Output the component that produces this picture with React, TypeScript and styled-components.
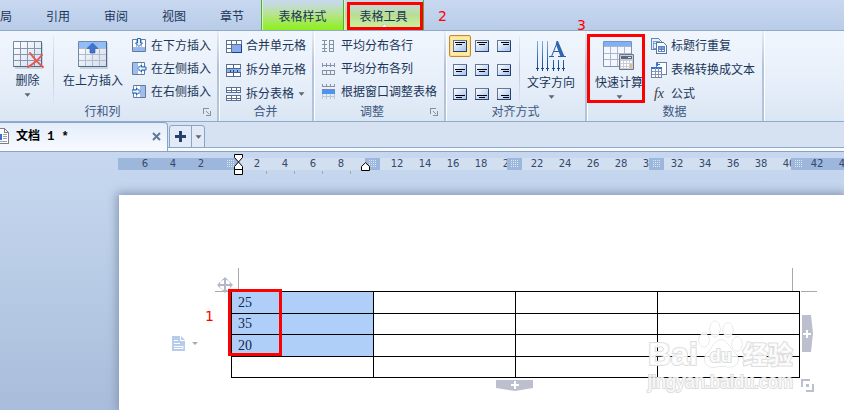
import React from "react";
import styled, { createGlobalStyle, css } from "styled-components";

const Global = createGlobalStyle`
  *, *::before, *::after { box-sizing: border-box; }
  html, body { margin: 0; padding: 0; }
  body {
    font-family: "Liberation Sans", "Noto Sans CJK SC", sans-serif;
    font-size: 12px;
    line-height: 16px;
    color: #1b3558;
  }
  button {
    margin: 0; padding: 0; border: 0; background: none;
    font: inherit; color: inherit; white-space: nowrap;
  }
  svg { display: block; flex: none; }
`;

const Shell = styled.div`
  position: relative;
  display: flex;
  flex-direction: column;
  min-height: 100vh;
  overflow: hidden;
  background: #c5d5ee;
`;

/* ---------- menu ---------- */

const MenuBar = styled.nav`
  display: flex;
  height: 31px;
  background: linear-gradient(#c9d8f0, #b8cce8);
  border-bottom: 1px solid #8fa9cb;
`;

const MenuTab = styled.button<{ $cut?: boolean; $tone?: "style" | "tool" }>`
  position: relative;
  display: flex;
  align-items: center;
  justify-content: ${(p) => (p.$cut ? "flex-start" : "center")};
  width: ${(p) => (p.$cut ? 29 : 58)}px;
  height: 30px;
  padding-top: 4px;
  ${(p) =>
    p.$tone &&
    css`
      width: 82px;
      border-left: 1px solid #4fae3c;
      box-shadow: inset 1px 0 #d9f0c8;
    `}
  ${(p) =>
    p.$tone === "style" &&
    css`
      background: linear-gradient(#c6d9e6 10%, #b5e588 50%, #8cf01a);
    `}
  ${(p) =>
    p.$tone === "tool" &&
    css`
      width: 81px;
      border-right: 1px solid #4fae3c;
      background: linear-gradient(#c6d9e6 10%, #b8dd93 50%, #cdf59f);
    `}
`;

const Pointer = styled.svg`
  position: absolute;
  left: 50%;
  bottom: 1px;
  margin-left: -5px;
`;

/* ---------- ribbon ---------- */

const Ribbon = styled.div`
  display: flex;
  height: 91px;
  padding-left: 2px;
  background: linear-gradient(#f1f6fd, #e8f0fa 50%, #dbe6f4);
  border-bottom: 1px solid #92abcd;
`;

const GroupBox = styled.section<{ $width: number }>`
  display: flex;
  flex-direction: column;
  width: ${(p) => p.$width}px;
  flex: none;
  border-right: 2px solid #b9c8de;
  border-image: linear-gradient(#e6eef9, #b3c3da 40%, #b3c3da) 1;
  box-shadow: 1px 0 #fff;
`;

const GroupBody = styled.div`
  display: flex;
  height: 73px;
`;

const GroupFoot = styled.footer`
  display: grid;
  grid-template-columns: 1fr auto;
  align-items: center;
  justify-items: center;
  height: 16px;
  color: #3c5780;
`;

const Launcher = styled.button`
  width: 14px;
  height: 12px;
`;

const BigButton = styled.button<{ $width: number; $drop?: number }>`
  display: flex;
  flex-direction: column;
  align-items: center;
  width: ${(p) => p.$width}px;
  padding-top: ${(p) => (p.$drop ? 10 : 9)}px;
  gap: 4px;
`;

const Divider = styled.div`
  width: 1px;
  margin-top: 5px;
  background: linear-gradient(#e2eaf6, #bccbdf, #dde6f3);
`;

const List = styled.div<{ $row: number; $pad: number }>`
  display: grid;
  grid-auto-rows: ${(p) => p.$row}px;
  align-content: start;
  padding: 3px 0 0 ${(p) => p.$pad}px;
`;

const ListButton = styled.button`
  display: flex;
  align-items: center;
  gap: 4px;
`;

const AlignGrid = styled.div`
  display: grid;
  grid-template-columns: repeat(3, 22px);
  grid-auto-rows: 24px;
  padding: 3px 4px 0 3px;
`;

const AlignButton = styled.button<{ $on?: boolean }>`
  display: flex;
  align-items: center;
  justify-content: center;
  height: 22px;
  margin-top: 1px;
  border-radius: 2px;
  ${(p) =>
    p.$on &&
    css`
      border: 1px solid #c8892b;
      background: radial-gradient(#ffe56a, #fdf0b5);
      box-shadow: inset 0 0 0 1px #fbdc9a;
    `}
`;

/* ---------- document tabs ---------- */

const DocTabs = styled.div`
  display: flex;
  height: 30px;
  align-items: flex-start;
  background: linear-gradient(#d6e1f1 0 25px, #8fa9cb 25px 26px, #f6fafe 26px 29px, #88a2c5 29px);
`;

const DocTab = styled.div`
  display: flex;
  align-items: center;
  width: 168px;
  height: 29px;
  padding: 0 6px 2px 0;
  border: 1px solid #89a4c8;
  border-left: 0;
  border-bottom: 0;
  border-radius: 0 4px 0 0;
  background: linear-gradient(#e3edfa, #f8fbff);
`;

const DocName = styled.span`
  flex: 1;
  padding: 2px 0 0 7px;
  font-family: "Liberation Mono", "Noto Sans CJK SC", monospace;
  font-weight: 700;
  color: #000;
  white-space: pre;
`;

const NewTab = styled.div`
  display: flex;
  width: 36px;
  height: 23px;
  margin: 3px 0 0 1px;
  border: 1px solid #89a4c8;
  border-radius: 3px 3px 0 0;
  background: #e1eaf6;
`;

const NewButton = styled.button<{ $arrow?: boolean }>`
  display: flex;
  align-items: center;
  justify-content: center;
  flex: ${(p) => (p.$arrow ? "0 0 13px" : "1")};
  border-left: ${(p) => (p.$arrow ? "1px solid #89a4c8" : "0")};
`;

/* ---------- workspace ---------- */

const Workspace = styled.main`
  display: flex;
  flex-direction: column;
  flex: 1;
  padding-top: 6px;
  background: linear-gradient(#c7d7f0, #bfd1ea 30%, #b3c7e2 65%, #a9bcdb);
`;

const Ruler = styled.div`
  position: relative;
  display: flex;
  height: 12px;
  margin-left: 118px;
`;

const Segment = styled.div<{ $width?: number; $dark?: boolean }>`
  flex: ${(p) => (p.$width ? `0 0 ${p.$width}px` : "1")};
  background: ${(p) => (p.$dark ? "#9db7dc" : "#d2dff1")};
`;

const ColumnMark = styled.div`
  display: flex;
  align-items: center;
  justify-content: center;
  flex: 0 0 15px;
  z-index: 1;
  background: #9db7dc;
`;

const Numbers = styled.div`
  position: absolute;
  inset: 0;
  display: flex;
  padding-left: 13px;
  overflow: hidden;
  font: 10px/12px "DejaVu Sans", sans-serif;
  color: #33486a;
`;

const Num = styled.span`
  flex: 0 0 28px;
  text-align: center;
`;

const Ticks = styled.div`
  display: flex;
  gap: 27px;
  height: 25px;
  padding: 1px 0 0 266px;
`;

const Tick = styled.i`
  width: 1px;
  height: 3px;
  background: #ada794;
`;

const Indent = styled.svg<{ $x: number; $y: number }>`
  position: absolute;
  left: ${(p) => p.$x}px;
  top: ${(p) => p.$y}px;
  z-index: 2;
`;

const Sheet = styled.article`
  flex: 1;
  margin-left: 119px;
  padding: 96px 44px 32px 112px;
  background: #fff;
  box-shadow: 0 0 9px 2px #8496b1;
`;

const TableArea = styled.div`
  position: relative;
`;

const DataTable = styled.table`
  width: 100%;
  table-layout: fixed;
  border-collapse: collapse;
  font: 14px/20px "Liberation Serif", serif;
  color: #10284f;
`;

const Row = styled.tr`
  height: 21px;
  &:nth-child(odd) {
    height: 22px;
  }
`;

const Cell = styled.td<{ $on: boolean }>`
  padding: 0 0 0 6px;
  border: 1px solid #000;
  line-height: 20px;
  background: ${(p) => (p.$on ? "#b0cff8" : "transparent")};
`;

const Over = styled.div<{ $l?: number; $r?: number; $t: number }>`
  position: absolute;
  top: ${(p) => p.$t}px;
  ${(p) => (p.$r !== undefined ? `right: ${p.$r}px;` : `left: ${p.$l}px;`)}
`;

const MarginLine = styled.div<{ $tall?: boolean }>`
  width: ${(p) => (p.$tall ? 1 : 16)}px;
  height: ${(p) => (p.$tall ? 23 : 1)}px;
  background: #a9a9a9;
`;

/* ---------- annotations ---------- */

const RedBox = styled.div<{ $l: number; $t: number; $w: number; $h: number }>`
  position: absolute;
  z-index: 3;
  left: ${(p) => p.$l}px;
  top: ${(p) => p.$t}px;
  width: ${(p) => p.$w}px;
  height: ${(p) => p.$h}px;
  border: 3px solid #fe0000;
  pointer-events: none;
`;

const RedNum = styled.span<{ $l: number; $t: number }>`
  position: absolute;
  left: ${(p) => p.$l}px;
  top: ${(p) => p.$t}px;
  font: 14px/16px "DejaVu Sans", sans-serif;
  color: #fe0000;
`;

const Watermark = styled.div`
  position: absolute;
  right: 0;
  top: 27px;
  width: 152px;
  color: rgba(255, 255, 255, 0.88);
  -webkit-text-stroke: 2px #dedede;
  paint-order: stroke fill;
  white-space: nowrap;
`;

const Brand = styled.div`
  display: flex;
  align-items: flex-end;
  height: 52px;
  font: 700 32px/32px "Liberation Sans", sans-serif;
`;

const BrandCjk = styled.span`
  font: 700 25px/34px "Noto Sans CJK SC", sans-serif;
`;

const Paw = styled.div`
  position: relative;
  width: 45px;
  height: 50px;
  font: 700 18px/20px "Liberation Sans", sans-serif;
`;

const PawText = styled.span`
  position: absolute;
  left: 12px;
  top: 26px;
`;

const Url = styled.div`
  padding-top: 2px;
  font: 18px/20px "Liberation Sans", sans-serif;
`;

/* ---------- icons ---------- */

const Caret = () => (
  <svg width="7" height="4" viewBox="0 0 7 4">
    <path d="M1 0.5h5L3.5 3.5z" fill="#5c6674" stroke="#5c6674" strokeWidth=".5" />
  </svg>
);

const BigGrid = ({ children, head, id }: { children?: React.ReactNode; head?: boolean; id: string }) => (
  <svg width="32" height="29" viewBox="0 0 32 29">
    <defs>
      <linearGradient id={id} x1="0" y1="0" x2="1" y2="1">
        <stop offset="0" stopColor="#fff" />
        <stop offset="1" stopColor="#d3dcea" />
      </linearGradient>
    </defs>
    <path d="M3 3h28v26H3z" fill="#8a9ab0" opacity=".35" />
    <path d="M1.5 1.5h28v25h-28z" fill={`url(#${id})`} stroke="#7388a4" />
    {head && <path d="M2 2h27v6H2z" fill="#8fbcfb" />}
    <path d="M8.5 2v24M15.5 2v24M22.5 2v24M2 8.5h27M2 14.5h27M2 20.5h27" stroke={head ? "#aebbd0" : "#8496b0"} fill="none" />
    <path d="M1.5 26.5h28v-25" stroke="#51688a" fill="none" />
    {children}
  </svg>
);

const DeleteIcon = () => (
  <BigGrid id="gd">
    <path d="M16 27c4-2 11-8 14-12M18 13c3 4 8 10 13 14" stroke="#e9574f" strokeWidth="2" fill="none" strokeLinecap="round" />
  </BigGrid>
);

const InsertAboveIcon = () => (
  <BigGrid id="gi" head>
    <path d="M15.5 3l5.500 5.500h-3v4.500h-5v-4.500h-3z" fill="#3f74d0" stroke="#2c59ab" strokeWidth=".6" />
  </BigGrid>
);

const CalcIcon = () => (
  <svg width="32" height="30" viewBox="0 0 32 30">
    <path d="M.5.5h28v25H.5z" fill="#f4f7fb" stroke="#7f92ad" />
    <path d="M1 1h27v4H1z" fill="#7fb1f8" />
    <path d="M7.500 5v20M14.500 5v20M21.500 5v20M1 5.500h27M1 12.500h27M1 18.500h27" stroke="#a9b8ce" fill="none" />
    <path d="M16.500 13.500h14v15h-14z" fill="#c9cfd9" stroke="#6d7787" />
    <path d="M18 15h11v3H18z" fill="#5b6a82" />
    <path d="M25 16h3v1h-3z" fill="#dfe5ee" />
    <path d="M18 20h2v2h-2zM21 20h2v2h-2zM24 20h2v2h-2zM27 20h2v2h-2zM18 23h2v2h-2zM21 23h2v2h-2zM24 23h2v2h-2zM18 26h2v1h-2zM21 26h2v1h-2zM24 26h2v1h-2z" fill="#fff" />
    <path d="M27 23h2v4h-2z" fill="#e6b98c" />
  </svg>
);

const DirectionIcon = () => (
  <svg width="32" height="30" viewBox="0 0 32 30">
    <defs>
      <linearGradient id="dir" gradientUnits="userSpaceOnUse" x1="0" y1="0" x2="0" y2="30">
        <stop offset="0" stopColor="#86b0e0" />
        <stop offset=".6" stopColor="#2b68b2" />
        <stop offset="1" stopColor="#143f80" />
      </linearGradient>
    </defs>
    <path
      d="M2 0h1v30h-1zM7 0h1v30h-1zM12 0h1v30h-1zM18 19h1v11h-1zM23 19h1v11h-1zM28 19h1v11h-1zM1 27h3v1h-3zM6 27h3v1h-3zM11 27h3v1h-3zM17 27h3v1h-3zM22 27h3v1h-3zM27 27h3v1h-3z"
      fill="url(#dir)"
    />
    <path d="M14 15.500h5M23 15.500h8M16.500 15.500L22 2M18.500 10.500h7" stroke="#2b5da3" fill="none" />
    <path d="M21.500 0h1.500l6.500 15.500h-4L20.800 3z" fill="#2f66ae" />
  </svg>
);

const Frame = ({ children }: { children: React.ReactNode }) => (
  <svg width="15" height="15" viewBox="0 0 15 15">
    {children}
  </svg>
);

const InsertBelow = () => (
  <Frame>
    <path d="M.5 1.500h13v12H.5z" fill="#fff" stroke="#66799a" />
    <path d="M1 10h12v3H1z" fill="#8fb7f3" />
    <path d="M4.500 2v11M9.500 2v11M1 9.500h12" stroke="#a7b9d6" fill="none" />
    <path d="M7 8.500L3.500 5H5.500V.5h3V5h2z" fill="#e4f2ff" stroke="#1a66b8" />
  </Frame>
);

const InsertSide = ({ right }: { right?: boolean }) => (
  <Frame>
    <g transform={right ? "matrix(-1 0 0 1 14 0)" : undefined}>
      <path d="M.5 1.500h12v12H.5z" fill="#fff" stroke="#66799a" />
      <path d="M1 2h4v11H1z" fill="#9cc0f6" />
      <path d="M5.500 2v11M9.500 2v11M1 5.500h11M1 9.500h11" stroke="#a7b9d6" fill="none" />
      <path d="M6 7.500L9.500 4v2H14v3H9.500v2z" fill="#e4f2ff" stroke="#1a66b8" />
    </g>
  </Frame>
);

const Small = ({ children, w = 16 }: { children: React.ReactNode; w?: number }) => (
  <svg width={w} height="16" viewBox={`0 0 ${w} 16`} shapeRendering="crispEdges">
    {children}
  </svg>
);

const MergeIcon = () => (
  <Small>
    <path d="M.5 2.500h15v12H.5z" fill="#fff" stroke="#5b7093" />
    <path d="M.5 6.500h15M5.500 2v13M10.500 2v4M.5 10.500h5" stroke="#5b7093" fill="none" />
    <path d="M6 7h9v7H6z" fill="#86acef" />
    <path d="M5.500 14.500h10v-8" stroke="#1f3f84" fill="none" />
  </Small>
);

const SplitCellIcon = () => (
  <Small>
    <path d="M.5 2.500h14v12H.5z" fill="#fff" stroke="#5b7093" />
    <path d="M1 7h14v4H1z" fill="#86b1f5" />
    <path d="M.5 6.500h14M.5 10.500h14M7.500 2v4M7.500 11v4" stroke="#4c6288" fill="none" />
    <path d="M4 8h1v2H4zM7 8h1v2H7zM11 8h1v2h-1z" fill="#1f3f84" />
  </Small>
);

const SplitTableIcon = () => (
  <Small>
    <path d="M.5 1.500h14v5H.5zM.5 9.500h14v5H.5z" fill="#fff" stroke="#5b7093" />
    <path d="M5.500 1v6M10.500 1v6M5.500 9v6M10.500 9v6M0 4.500h15M0 12.500h15" stroke="#5b7093" fill="none" />
  </Small>
);

const RowsIcon = () => (
  <Small w={15}>
    <path d="M2.500 2v12M0 2.500h5M0 6.500h5M0 10.500h5M0 13.500h5M7.500 2.500h4v11h-4zM7 6.500h5M7 10.500h5" stroke="#8592a6" fill="none" />
  </Small>
);

const ColsIcon = () => (
  <Small w={15}>
    <path d="M.5 2v4M4.500 2v4M8.500 2v4M12.500 2v4M0 4.500h13M.5 9.500h12v4H.5zM4.500 9v5M8.500 9v5" stroke="#8592a6" fill="none" />
  </Small>
);

const FitIcon = () => (
  <Small w={15}>
    <path d="M.5 0v3M4.500 0v3M8.500 0v3M12.500 0v3M0 2.500h13" stroke="#8592a6" fill="none" />
    <path d="M0 5h13v5H0z" fill="#4d93f2" />
    <path d="M0 5.500h13" stroke="#7a8ba5" />
    <path d="M.5 10v5M4.500 10v5M8.500 10v5M12.500 10v5M0 12.500h13" stroke="#bac5d6" fill="none" />
  </Small>
);

const RepeatIcon = () => (
  <Small>
    <path d="M.5.5h7l3 3v8H.5z" fill="#eaf2fd" stroke="#6a84ad" />
    <path d="M2 3h6v7H2zM2 5.500h6" stroke="#6f9be0" fill="none" />
    <path d="M5.500 4.500h7l3 3v8h-10z" fill="#fff" stroke="#5a759f" />
    <path d="M7 8h7v3H7z" fill="#6ca2f3" />
    <path d="M7.500 8.500h6v5h-6zM10.500 8v6M7 11.500h7" stroke="#5f83bd" fill="none" />
  </Small>
);

const ConvertIcon = () => (
  <Small>
    <path d="M5.500.5h10v12h-10z" fill="#fbfdff" stroke="#6d7f9b" />
    <path d="M.5 5.500h10v10H.5z" fill="#fff" stroke="#71839f" />
    <path d="M0 5h11v2H0z" fill="#2f6fdc" />
    <path d="M4.500 6v9M7.500 6v9M1 9.500h10M1 12.500h10" stroke="#8496b3" fill="none" />
    <path d="M6.500 1v3M5 2.500h4" stroke="#2f6fdc" />
  </Small>
);

const Fx = styled.span`
  width: 16px;
  text-align: center;
  font: italic 14px/16px "Liberation Serif", serif;
  color: #3d3d3d;
`;

const AlignIcon = ({ x, y }: { x: number; y: number }) => {
  const top = [2.5, 5.5, 7.5][y];
  const long = ["M2 T h10", "M2 T h10", "M4 T h8"][x].replace("T", String(top));
  const short = ["M3 T h6", "M4 T h6", "M6 T h6"][x].replace("T", String(top + 2));
  return (
    <svg width="14" height="12" viewBox="0 0 14 12" shapeRendering="crispEdges">
      <defs>
        <linearGradient id={`al${x}${y}`} x1="0" y1="0" x2="1" y2="1">
          <stop offset="0" stopColor="#fff" />
          <stop offset="1" stopColor="#9fc0f2" />
        </linearGradient>
      </defs>
      <path d="M.5.5h13v11H.5z" fill={`url(#al${x}${y})`} stroke="#64779a" />
      <path d="M0 11.500h13.500V1" stroke="#2d3f66" fill="none" />
      <path d={long + short} stroke="#000" fill="none" />
    </svg>
  );
};

const LauncherIcon = () => (
  <svg width="8" height="8" viewBox="0 0 8 8" shapeRendering="crispEdges">
    <path d="M.5 6V.5H6M7.500 3v4.500H3" stroke="#8390a4" fill="none" />
    <path d="M3 3h1v1h1v1h1v1H5V5H4V4H3z" fill="#8390a4" />
  </svg>
);

const DocIcon = () => (
  <svg width="9" height="16" viewBox="0 0 9 16" shapeRendering="crispEdges">
    <path d="M-4 .5h8.500l4 4v11H-4z" fill="#fff" stroke="#7b7f8c" />
    <path d="M4.500 1v3.500H8" stroke="#7b7f8c" fill="none" />
    <path d="M0 6h2v6H0z" fill="#3c6fd0" />
    <path d="M3 6.500h4M3 8.500h4M3 10.500h4M0 13.500h7" stroke="#9aa2b4" />
  </svg>
);

const Dots = () => (
  <svg width="8" height="8" viewBox="0 0 8 8" shapeRendering="crispEdges">
    {[0, 2, 4, 6].map((y) => (
      <path key={y} d={`M0 ${y + 0.5}h1m1 0h1m1 0h1m1 0h1`} stroke="#dce7f5" />
    ))}
  </svg>
);

/* ---------- page ---------- */

const Group = ({
  name,
  width,
  launcher,
  children,
}: {
  name: string;
  width: number;
  launcher?: boolean;
  children: React.ReactNode;
}) => (
  <GroupBox $width={width} aria-label={name}>
    <GroupBody>{children}</GroupBody>
    <GroupFoot>
      <span>{name}</span>
      {launcher && (
        <Launcher aria-label={`${name}选项`}>
          <LauncherIcon />
        </Launcher>
      )}
    </GroupFoot>
  </GroupBox>
);

const Item = ({ icon, label, menu }: { icon: React.ReactNode; label: string; menu?: boolean }) => (
  <ListButton>
    {icon}
    <span>{label}</span>
    {menu && <Caret />}
  </ListButton>
);

const rulerValues = Array.from({ length: 26 }, (_, i) => -6 + i * 2);
const rows = ["25", "35", "20", ""];

export default function App() {
  return (
    <Shell>
      <Global />
      <MenuBar>
        <MenuTab $cut>局</MenuTab>
        {["引用", "审阅", "视图", "章节"].map((t) => (
          <MenuTab key={t}>{t}</MenuTab>
        ))}
        <MenuTab $tone="style">表格样式</MenuTab>
        <MenuTab $tone="tool">
          表格工具
          <Pointer width="11" height="5" viewBox="0 0 11 5">
            <path d="M0 5L5.500 0 11 5z" fill="#fff" stroke="#a3b59a" strokeWidth=".8" />
          </Pointer>
        </MenuTab>
      </MenuBar>

      <Ribbon>
        <Group name="行和列" width={217} launcher>
          <BigButton $width={51}>
            <DeleteIcon />
            <span>删除</span>
            <Caret />
          </BigButton>
          <Divider />
          <BigButton $width={78}>
            <InsertAboveIcon />
            <span>在上方插入</span>
          </BigButton>
          <List $row={23} $pad={0}>
            <Item icon={<InsertBelow />} label="在下方插入" />
            <Item icon={<InsertSide />} label="在左侧插入" />
            <Item icon={<InsertSide right />} label="在右侧插入" />
          </List>
        </Group>
        <Group name="合并" width={95}>
          <List $row={24} $pad={7}>
            <Item icon={<MergeIcon />} label="合并单元格" />
            <Item icon={<SplitCellIcon />} label="拆分单元格" />
            <Item icon={<SplitTableIcon />} label="拆分表格" menu />
          </List>
        </Group>
        <Group name="调整" width={132} launcher>
          <List $row={23} $pad={8}>
            <Item icon={<RowsIcon />} label="平均分布各行" />
            <Item icon={<ColsIcon />} label="平均分布各列" />
            <Item icon={<FitIcon />} label="根据窗口调整表格" />
          </List>
        </Group>
        <Group name="对齐方式" width={141}>
          <AlignGrid>
            {[0, 1, 2].map((y) =>
              [0, 1, 2].map((x) => (
                <AlignButton key={`${x}${y}`} $on={x === 0 && y === 0} aria-label={`对齐 ${y * 3 + x + 1}`}>
                  <AlignIcon x={x} y={y} />
                </AlignButton>
              ))
            )}
          </AlignGrid>
          <Divider />
          <BigButton $width={62} $drop={1}>
            <DirectionIcon />
            <span>文字方向</span>
            <Caret />
          </BigButton>
        </Group>
        <Group name="数据" width={177}>
          <BigButton $width={64} $drop={1}>
            <CalcIcon />
            <span>快速计算</span>
            <Caret />
          </BigButton>
          <List $row={24} $pad={0}>
            <Item icon={<RepeatIcon />} label="标题行重复" />
            <Item icon={<ConvertIcon />} label="表格转换成文本" />
            <Item icon={<Fx>fx</Fx>} label="公式" />
          </List>
        </Group>
      </Ribbon>

      <DocTabs>
        <DocTab>
          <DocIcon />
          <DocName>文档 1 *</DocName>
          <button aria-label="关闭">
            <svg width="9" height="9" viewBox="0 0 9 9">
              <path d="M1 1l7 7M8 1L1 8" stroke="#5f7896" strokeWidth="2" />
            </svg>
          </button>
        </DocTab>
        <NewTab>
          <NewButton aria-label="新建">
            <svg width="11" height="11" viewBox="0 0 11 11">
              <path d="M4 0h3v4h4v3H7v4H4V7H0V4h4z" fill="#24406b" />
            </svg>
          </NewButton>
          <NewButton $arrow aria-label="更多">
            <Caret />
          </NewButton>
        </NewTab>
      </DocTabs>

      <Workspace>
        <Ruler>
          <Segment $width={105} $dark />
          <ColumnMark><Dots /></ColumnMark>
          <Segment $width={127} />
          <ColumnMark><Dots /></ColumnMark>
          <Segment $width={127} />
          <ColumnMark><Dots /></ColumnMark>
          <Segment $width={127} />
          <ColumnMark><Dots /></ColumnMark>
          <Segment $width={127} />
          <ColumnMark><Dots /></ColumnMark>
          <Segment $dark />
          <Numbers>
            {rulerValues.map((n) => (
              <Num key={n}>{n === 0 || n === 10 ? "" : Math.abs(n)}</Num>
            ))}
          </Numbers>
          <Indent $x={116} $y={-4} width="9" height="21" viewBox="0 0 9 21">
            <path d="M.5.5h8v3L4.500 8 .5 3.500zM4.500 8l4 4.500v3h-8v-3zM.5 15.500h8v5h-8z" fill="#fff" stroke="#000" />
          </Indent>
          <Indent $x={243} $y={4} width="9" height="9" viewBox="0 0 9 9">
            <path d="M4.500.7l4 3.800v4h-8v-4z" fill="#fff" stroke="#000" />
          </Indent>
        </Ruler>
        <Ticks>
          <Tick /><Tick /><Tick /><Tick />
        </Ticks>
        <Sheet>
          <TableArea>
            <DataTable>
              <tbody>
                {rows.map((v, i) => (
                  <Row key={i}>
                    <Cell $on={i < 3}>{v}</Cell>
                    <Cell $on={false} />
                    <Cell $on={false} />
                    <Cell $on={false} />
                  </Row>
                ))}
              </tbody>
            </DataTable>
            <Over $l={7} $t={-23}><MarginLine $tall /></Over>
            <Over $l={-16} $t={0}><MarginLine /></Over>
            <Over $r={7} $t={-23}><MarginLine $tall /></Over>
            <Over $r={-17} $t={0}><MarginLine /></Over>
            <Over $l={-14} $t={-14}>
              <svg width="16" height="16" viewBox="0 0 16 16">
                <circle cx="8" cy="8" r="5.500" fill="none" stroke="#c3c5d2" strokeDasharray="2 1" />
                <path d="M8 1v14M1 8h14" stroke="#b5b8c8" strokeWidth="2" />
                <path d="M8 0l3 3H5zM8 16l3-3H5zM0 8l3-3v6zM16 8l-3-3v6z" fill="#b5b8c8" />
              </svg>
            </Over>
            <Over $l={-59} $t={45}>
              <svg width="28" height="15" viewBox="0 0 28 15">
                <path d="M0 0h9l4 4v11H0z" fill="#b7cbea" />
                <path d="M8.500 0v4.500H13M2 4.500h4M2 7.500h6M2 10.500h9v2H2" stroke="#fff" fill="none" />
                <path d="M20 6h6l-3 3z" fill="#aaa" />
              </svg>
            </Over>
            <Over $r={-14} $t={24}>
              <svg width="12" height="37" viewBox="0 0 12 37">
                <path d="M0 0h9l2 18-2 19H0z" fill="#bcbfce" />
                <path d="M5 15v8M1 19h8" stroke="#fff" strokeWidth="2" />
              </svg>
            </Over>
            <Over $r={-14} $t={88}>
              <svg width="13" height="13" viewBox="0 0 13 13">
                <path d="M1 8V1h8M12 5v7H5" stroke="#bcbfce" strokeWidth="2" fill="none" />
                <path d="M5 5h3v3H5z" fill="#bcbfce" />
              </svg>
            </Over>
            <Over $l={265} $t={89}>
              <svg width="37" height="11" viewBox="0 0 37 11">
                <path d="M0 0h37v8l-18 3L0 8z" fill="#bcbfce" />
                <path d="M19 1v8M15 5h8" stroke="#fff" strokeWidth="2" />
              </svg>
            </Over>
            <RedBox $l={-3} $t={-2} $w={54} $h={67} />
            <RedNum $l={-26} $t={17}>1</RedNum>
            <Watermark>
              <Brand>
                <span>Bai</span>
                <Paw>
                  <svg width="45" height="50" viewBox="0 0 45 50" fill="rgba(255,255,255,.85)" stroke="#d8d8d8">
                    <ellipse cx="6" cy="20" rx="5" ry="7" />
                    <ellipse cx="17" cy="9" rx="5" ry="8" />
                    <ellipse cx="30" cy="10" rx="5" ry="7" />
                    <ellipse cx="39" cy="24" rx="5" ry="7" />
                    <path d="M23 20c-7 0-8 8-13 12s-5 13 3 15c5 1 6-1 10-1s8 2 13 0c6-3 5-10 0-14s-6-12-13-12z" />
                  </svg>
                  <PawText>du</PawText>
                </Paw>
                <BrandCjk>经验</BrandCjk>
              </Brand>
              <Url>jingyan.baidu.com</Url>
            </Watermark>
          </TableArea>
        </Sheet>
      </Workspace>

      <RedBox $l={347} $t={2} $w={76} $h={28} />
      <RedNum $l={438} $t={8}>2</RedNum>
      <RedNum $l={577} $t={17}>3</RedNum>
      <RedBox $l={587} $t={34} $w={58} $h={69} />
    </Shell>
  );
}
